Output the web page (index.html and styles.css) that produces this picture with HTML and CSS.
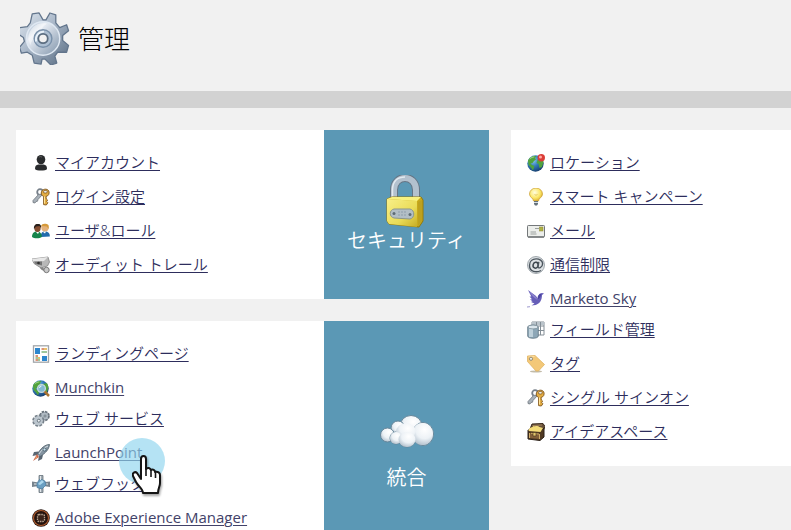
FILE: index.html
```html
<!DOCTYPE html>
<html lang="ja">
<head>
<meta charset="utf-8">
<meta name="viewport" content="width=device-width, initial-scale=1">
<title>管理</title>
<link rel="stylesheet" href="styles.css">
</head>
<body>
<svg class="defs" aria-hidden="true">
  <defs>
    <linearGradient id="steel" x1="0" y1="0" x2="1" y2="1"><stop offset="0" stop-color="#e2eaf2"/><stop offset=".45" stop-color="#a9b7c8"/><stop offset="1" stop-color="#566a80"/></linearGradient>
    <linearGradient id="disc" x1="0" y1="0" x2="1" y2="1"><stop offset="0" stop-color="#91a8c1"/><stop offset=".3" stop-color="#e9eef5"/><stop offset=".65" stop-color="#b3c0cf"/><stop offset="1" stop-color="#8195aa"/></linearGradient>
    <linearGradient id="gold" x1="0" y1="0" x2="1" y2="1"><stop offset="0" stop-color="#f8ef88"/><stop offset=".6" stop-color="#eadc58"/><stop offset="1" stop-color="#c8ad24"/></linearGradient>
    <radialGradient id="sea" cx=".35" cy=".3" r=".75"><stop offset="0" stop-color="#8fd0ee"/><stop offset=".5" stop-color="#3179bb"/><stop offset="1" stop-color="#163c6b"/></radialGradient>
    <radialGradient id="bulb" cx=".4" cy=".35" r=".7"><stop offset="0" stop-color="#fffde0"/><stop offset=".6" stop-color="#fbe768"/><stop offset="1" stop-color="#d9a92c"/></radialGradient>
    <radialGradient id="puff" cx=".6" cy=".3" r=".75"><stop offset="0" stop-color="#ffffff"/><stop offset=".55" stop-color="#edf2f6"/><stop offset="1" stop-color="#aebdca"/></radialGradient>
    <symbol id="keys" viewBox="0 0 18 18">
      <circle cx="8" cy="4" r="2.800" fill="none" stroke="#77808a" stroke-width="1.800"/>
      <path d="M6.500 6.500 1 12.500v2l2 .5 1-1.500 1.500-.3.500-1.700L10 7" fill="#a8b1b9" stroke="#6f767d" stroke-width=".8"/>
      <path d="M9.500 3.500C10.500 1 15 0 16.800 3c1 2.500-.3 5-2.800 5.500l.3 2.500 1.300 1-.9 1.500 1.200 1.300-1.600 2.200-2.700-.4V8.500C9.500 7.500 8.800 5.600 9.500 3.500z" fill="#e3ad43" stroke="#80561d" stroke-width=".9"/>
      <path d="M12.500 8.500v7" stroke="#ffe49a"/><ellipse cx="13.300" cy="3.800" rx="2.100" ry="1.300" fill="#eef3f3" stroke="#80561d" stroke-width=".8"/>
    </symbol>
    <symbol id="globe" viewBox="0 0 18 18">
      <circle cx="8.500" cy="9.500" r="8.200" fill="url(#sea)"/>
      <path d="M1 6.500C2.500 3 6 1.500 9.500 2L8 4 9 5.500 7 7 5.500 9 3.500 9.500 5 11 7.500 12 6 16.500 C4.500 14 3 12 1.500 11zM11 5l4-1 1.500 4-1.500 5-2.500 1-1-4-2-1z" fill="#51a33d"/>
      <path d="M2.800 5c1.300-1.500 3-2 4.500-2" fill="none" stroke="#a6d885"/>
    </symbol>
  </defs>
</svg>

<header class="header">
  <svg class="header-icon" viewBox="0 0 50 54" aria-hidden="true">
    <path d="M12 2l7-1 4 7 3 0 4-7 6 2v8l4 5 7-3 2 6-6 5v5l6 5-2 7-9 0-3 4 2 7-6 2-6-6-3 0-1 5-7-1-2-8-5-3-6 1-2-6 5-6-1-4-6-4 2-6 8-1 3-4z" fill="url(#steel)" stroke="#62758c" stroke-width="1.300" stroke-linejoin="round"/>
    <circle cx="23" cy="27" r="17" fill="url(#disc)" stroke="#dfe8f2" stroke-width="1.500"/>
    <path d="M8 27C9 14 19 10 27 12c-7 4-5 8-10 12-4 3-6 6-7 10z" fill="#fff" opacity=".45"/>
    <circle cx="23" cy="27" r="9" fill="#adbfd2" stroke="#7a91aa" stroke-width="1.500"/>
    <path d="M16 30a8 8 0 0 1 8-10" fill="none" stroke="#e9f2fa" stroke-width="2"/>
    <circle cx="23" cy="27" r="4.800" fill="#f1f1f1" stroke="#5b6d80" stroke-width="1.800"/>
  </svg>
  <h1 class="title">管理</h1>
</header>

<main class="board">
  <div class="column">
    <section class="card split">
      <ul class="links">
        <li class="row"><svg class="icon" viewBox="0 0 18 18"><ellipse cx="9" cy="5.600" rx="4.300" ry="4.700" fill="#292b2d"/><path d="M3 15c0-3 1-4 3.500-4.500h5C14 11 15 12 15 15c-1 2-11 2-12 0z" fill="#292b2d"/><path d="M7 3.200c1-.8 2-.8 3 0" stroke="#666" fill="none"/></svg><a class="link" href="#">マイアカウント</a></li>
        <li class="row"><svg class="icon"><use href="#keys"/></svg><a class="link" href="#">ログイン設定</a></li>
        <li class="row"><svg class="icon" viewBox="0 0 18 18"><path d="M9 15c-.3-4 1-5.500 4-5.500s5 1.500 4.800 5z" fill="#216bac"/><circle cx="13" cy="5.800" r="3.700" fill="#e4b27b"/><path d="M9 5C9 1 14 1 16.500 3l.3 4-2-2.500L10 4z" fill="#d69a3a"/><path d="M11 10l2 1.500 1-2z" fill="#fff"/><path d="M0 15c0-4 2-5.500 5-5.500s5 2 4.800 5.500c-2 1.800-8 1.800-9.800 0z" fill="#16854c"/><ellipse cx="5.500" cy="6" rx="3.200" ry="4" fill="#854e32"/><path d="M2 7C1.500 3 4 1.600 6.500 2c2 .2 3 1.500 2.500 4L7.500 4 4 4.500z" fill="#27201d"/><path d="M4 10l2 2 1-2z" fill="#fff"/></svg><a class="link" href="#">ユーザ&amp;ロール</a></li>
        <li class="row"><svg class="icon" viewBox="0 0 18 18"><path d="M10 8c-2 3-1 5 3 6" stroke="#858585" stroke-width="2.500" fill="none"/><circle cx="14.500" cy="14" r="2.700" fill="#c9c9c9" stroke="#777"/><path d="M0 3l16-2 1.500 5-2 4-6.500 2-7-4.500z" fill="#b8b8b8" stroke="#777" stroke-width=".7"/><path d="M0 3l16-2-4 4-11 .4z" fill="#e7e7e7"/><path d="M2 5.500h8v4L3.500 8z" fill="#747474"/><circle cx="6.500" cy="7" r="1.300" fill="#303030"/></svg><a class="link" href="#">オーディット トレール</a></li>
      </ul>
      <div class="tile">
        <svg class="tile-icon lock" viewBox="0 0 44 54" aria-hidden="true">
          <path d="M9 26V15C9-1 31-1 31 15v11" fill="none" stroke="#657585" stroke-width="8"/>
          <path d="M9 26V15C9-1 31-1 31 15v11" fill="none" stroke="#b3c1ce" stroke-width="6"/>
          <path d="M7.500 25V14C8 5 14 2 20 2" fill="none" stroke="#e3eaf0" stroke-width="1.500"/>
          <path d="M2 24l5-2h29l2 3v21l-4 6-30-3-2-3z" fill="#c9aa1b" stroke="#91780c"/>
          <path d="M2 24l30 2v26L4 49l-2-3z" fill="url(#gold)"/><path d="M2 24l5-2h29l-4 4z" fill="#f8f17f"/>
          <path d="M33 27v24l4-5V25z" fill="#bda11f"/>
          <path d="M9 34h16c5 1 5 9 0 10l-16-1c-5-1-5-8 0-9z" fill="#b2bec6" stroke="#8b968c"/><circle cx="9" cy="38.500" r="1.500" fill="#5d6b73"/><circle cx="25" cy="39.500" r="1.500" fill="#5d6b73"/><path d="M13 37h8M13 40h8" stroke="#9aa9b5" stroke-width="1.500" stroke-dasharray="2 1"/>
        </svg>
        <h2 class="tile-title">セキュリティ</h2>
      </div>
    </section>

    <section class="card split tall">
      <ul class="links">
        <li class="row"><svg class="icon" viewBox="0 0 18 18"><rect x="1.500" y=".8" width="15" height="16.400" fill="#fff" stroke="#a2a6aa" stroke-width="1.300"/><path d="M3 3h5v6H3zM10 11h5v5h-5z" fill="#2d86cd"/><path d="M9.500 4H12M3.500 11H6M3.500 15H6" stroke="#d0704c" stroke-width="1.500"/><path d="M12 4h3M6 13h2" stroke="#e2ac3b" stroke-width="1.500"/><path d="M9.500 7H15M3.500 13H6M6 15h2" stroke="#7db57d" stroke-width="1.500"/></svg><a class="link" href="#">ランディングページ</a></li>
        <li class="row latin"><svg class="icon" viewBox="0 0 18 18"><use href="#globe" width="18" height="18"/><circle cx="9.500" cy="9.500" r="3.900" fill="#83bad2" stroke="#c5d8de" stroke-width="1.300"/><path d="M7.500 9a2 2 0 0 1 2-2" fill="none" stroke="#e9f7fb"/><path d="M12.500 12.500l4.500 4.500" stroke="#aa7434" stroke-width="2.500"/></svg><a class="link" href="#">Munchkin</a></li>
        <li class="row"><svg class="icon" viewBox="0 0 18 18"><circle cx="12.500" cy="6" r="4.200" fill="#98a3ac" stroke="#69737d" stroke-width="2.200" stroke-dasharray="2.400 .9"/><circle cx="12.500" cy="6" r="3.500" fill="#b0bac3"/><circle cx="6.300" cy="10.700" r="5" fill="#c4ccd2" stroke="#76808a" stroke-width="2.200" stroke-dasharray="2.700 1.200"/><circle cx="6.300" cy="10.700" r="4.500" fill="#bcc6ce"/><circle cx="6.800" cy="10.700" r="1.500" fill="#f4f6f8" stroke="#697680"/><circle cx="13" cy="6" r="1" fill="#f4f6f8" stroke="#697680"/></svg><a class="link" href="#">ウェブ サービス</a></li>
        <li class="row latin pointed"><svg class="icon" viewBox="0 0 18 18"><path d="M6.500 7.500L2 8 .5 12l5-1zM11 11l-1 4-4 2 1-5z" fill="#596672"/><path d="M17.500.5C13 .5 9 4 5.500 10L8 12.500C14 9 17 5 17.500.5z" fill="#8494a1" stroke="#4d5d68" stroke-width=".8"/><path d="M16 2C11 4 9 7 7 10" fill="none" stroke="#dce4e9"/><circle cx="12.500" cy="5.500" r="1.500" fill="#c9e2ed" stroke="#374d5b" stroke-width=".7"/><path d="M5 10L1 17l6-4z" fill="#c9664c"/><path d="M5 12l-3 3.500 3-2z" fill="#f2b16c"/></svg><a class="link" href="#">LaunchPoint</a>
          <span class="pointer" aria-hidden="true"><svg class="hand" viewBox="0 0 30 40"><path d="M9 24V4c0-4 5-4 5 0v10c2-2 4-1 5 1 2-1 4 0 4 2 3-1 5 1 5 3v8c0 4-2 5-2 10H11c0-4-5-7-7-11l-3-6c-1-3 2-5 4-3z" fill="#fff" stroke="#151515" stroke-width="2" stroke-linejoin="round"/><path d="M14 12v9M19 15v7M23.500 17v6" stroke="#151515" stroke-width="1.600"/></svg></span></li>
        <li class="row"><svg class="icon" viewBox="0 0 18 18"><path d="M7 .5h4V6H7zM7 12h4v5.500H7z" fill="#a0aab2" stroke="#68737c" stroke-width=".8"/><path d="M0 6.500l5 .8v4L0 12zM13 7l5-.5V12l-5-.8z" fill="#78848e"/><path d="M2 8h14v2H2z" fill="#aeb9c0"/><path d="M5 8l3-4 5 2 1 4-4 4-5-1.500z" fill="#6a9fc2" stroke="#47799b" stroke-width=".7"/><path d="M6 9l4-4 2 2-4 3z" fill="#acd8ee"/><path d="M8.500 1v4M8.500 14v3" stroke="#e1e6e9"/></svg><a class="link" href="#">ウェブフック</a></li>
        <li class="row latin"><svg class="icon" viewBox="0 0 18 18"><circle cx="9" cy="9" r="8.800" fill="#24130e"/><circle cx="9" cy="9" r="7.500" fill="none" stroke="#ad5a2d" stroke-width="1.200"/><rect x="5.500" y="5.500" width="7" height="7" rx="1.500" fill="#3b241b" stroke="#b7a38f" stroke-width="1.300" stroke-dasharray="1.500 .8"/></svg><a class="link" href="#">Adobe Experience Manager</a></li>
      </ul>
      <div class="tile">
        <svg class="tile-icon cloud" viewBox="0 0 54 34" aria-hidden="true"><g fill="url(#puff)" stroke="#66869a" stroke-width="1"><ellipse cx="31" cy="12" rx="11" ry="10.500"/><ellipse cx="18" cy="14" rx="7" ry="7"/><ellipse cx="7.500" cy="21" rx="7" ry="7"/><ellipse cx="43" cy="20" rx="10.500" ry="11.500"/><ellipse cx="16" cy="24" rx="6" ry="6"/><ellipse cx="27" cy="25.500" rx="8.500" ry="7.500"/></g><g fill="url(#puff)"><ellipse cx="42.500" cy="20" rx="10.500" ry="11"/><ellipse cx="26" cy="18" rx="10" ry="9"/><ellipse cx="16" cy="24" rx="6" ry="6"/><ellipse cx="27" cy="25.500" rx="8.500" ry="7.500"/></g></svg>
        <h2 class="tile-title spaced">統合</h2>
      </div>
    </section>
  </div>

  <div class="column">
    <section class="card">
      <ul class="links">
        <li class="row"><svg class="icon" viewBox="0 0 18 18"><use href="#globe" width="18" height="18"/><circle cx="14.300" cy="3.700" r="3.700" fill="#db3d38"/><circle cx="13.500" cy="3" r="1.500" fill="#ffaaa2"/></svg><a class="link" href="#">ロケーション</a></li>
        <li class="row"><svg class="icon" viewBox="0 0 18 18"><path d="M6.500 13C6.500 10 2.500 9.500 2.500 6a6.500 6 0 0 1 13 0c0 3.500-4 4-4 7z" fill="url(#bulb)" stroke="#c99b2c" stroke-width=".7"/><path d="M7 13h4v3l-1 1.500H8L7 16z" fill="#65717b"/><path d="M7 14.500h4" stroke="#d4dde3"/><path d="M7.500 6l1.500 1.500L10.500 6" fill="none" stroke="#d8ac3d" stroke-width=".6"/></svg><a class="link" href="#">スマート キャンペーン</a></li>
        <li class="row"><svg class="icon" viewBox="0 0 18 18"><rect x=".5" y="3.500" width="17" height="11.500" rx=".8" fill="#eceeeb" stroke="#74787a"/><path d="M1 15h16" stroke="#55595b"/><rect x="12.500" y="5" width="3.500" height="4" fill="#aeb346" stroke="#8e852c" stroke-width=".5"/><path d="M8 6.500h4M3.500 10H9M3.500 12h6" stroke="#9ba09e"/></svg><a class="link" href="#">メール</a></li>
        <li class="row"><svg class="icon" viewBox="0 0 18 18"><circle cx="9" cy="9" r="8.500" fill="#dde1e4" stroke="#8b949b" stroke-width=".8"/><ellipse cx="8.600" cy="9.200" rx="2.500" ry="3" fill="none" stroke="#3e474f" stroke-width="1.500" transform="rotate(15 8.600 9.200)"/><path d="M11.800 5.800l-.8 5c0 2.200 4.600 1 4.600-3C15.600 1.500 2.500.5 2.500 9.500c0 6.500 7 7.500 11.500 5" fill="none" stroke="#4b555d" stroke-width="1.400"/></svg><a class="link" href="#">通信制限</a></li>
        <li class="row latin"><svg class="icon" viewBox="0 0 18 18"><path d="M1 0l8 6 2 3c0-3 1-6 4-6l2 .5-2 1.500c0 6-3 9-6.500 10l-4 .5 3-2L4 12l1.500-.7-2.500-1.800 2-.3-2.500-2.700 1.800 0z" fill="#665eb8"/><path d="M2 1l7 6 1.500 3C7 8 4 5 2 1z" fill="#8c83cd"/><path d="M10.500 9c0-3 1-5 4-5-1 3-2 5-4 5z" fill="#4a43a0"/><path d="M0 17l3-.3" stroke="#9e99cf"/></svg><a class="link" href="#">Marketo Sky</a></li>
        <li class="row"><svg class="icon" viewBox="0 0 18 18"><path d="M5 1h12v13H5z" fill="#fff" stroke="#848e96"/><path d="M5 1h12v3H5z" fill="#bac4cb"/><path d="M5 5h12M5 9.500h12M9.500 1v13M13.500 1v13" stroke="#848e96"/><path d="M.7 6c0-2.500 10.600-2.500 10.600 0v9c0 3-10.600 3-10.600 0z" fill="#8ea7b7" stroke="#5e7481" stroke-width=".8"/><path d="M3 7v9M5 7v9" stroke="#d9e6ed" stroke-width="1.300"/><ellipse cx="6" cy="6" rx="5" ry="1.900" fill="#dce6ec" stroke="#718590" stroke-width=".7"/></svg><a class="link" href="#">フィールド管理</a></li>
        <li class="row"><svg class="icon" viewBox="0 0 18 18"><ellipse cx="9" cy="16.500" rx="6" ry="1" fill="#c2bba9"/><path d="M.5 1L8 .5l9.500 9-6 6.500H9L.5 6.500z" fill="#f3c878" stroke="#dfb463" stroke-width=".8"/><path d="M1.500 2L7.500 1.500" stroke="#ffe0a3"/><circle cx="4" cy="3.800" r="1.600" fill="#e8ecea" stroke="#9b8e70"/></svg><a class="link" href="#">タグ</a></li>
        <li class="row"><svg class="icon"><use href="#keys"/></svg><a class="link" href="#">シングル サインオン</a></li>
        <li class="row"><svg class="icon" viewBox="0 0 18 18"><path d="M3 6L5 1l11-.5 2 3-2 4.500z" fill="#675039" stroke="#38291d"/><path d="M5.500 2.500L15 2" stroke="#a1835d"/><path d="M1 7l12 1 4-3v9l-4 3.500L1 16z" fill="#503922" stroke="#2b2019"/><path d="M1.500 8c1-5 4-3 5-5 2 1 4-1 6 1l3.500 1-2.500 4z" fill="#f4dc78"/><path d="M2 10l11 1v5L2 15z" fill="#826039"/><path d="M2.500 10v5M12.500 11v5M4 10.300l8 .7" stroke="#d0ad68"/><path d="M6 9.500h3V13H6z" fill="#e1c66c" stroke="#45311c" stroke-width=".6"/></svg><a class="link" href="#">アイデアスペース</a></li>
      </ul>
    </section>
  </div>
</main>
</body>
</html>
```
FILE: styles.css
```css
* {
  box-sizing: border-box;
}

body {
  height: 100vh;
  margin: 0;
  overflow: hidden;
  background: #f1f1f1;
  color: #2d2d5c;
  font-family: "Open Sans", "Noto Sans CJK JP", sans-serif;
  font-size: 15px;
  font-weight: 350;
}

.defs {
  position: absolute;
  width: 0;
  height: 0;
}

.header {
  display: flex;
  align-items: center;
  gap: 8px;
  padding: 12px 20px 26px;
  border-bottom: 17px solid #d2d2d2;
}

.header-icon {
  width: 50px;
  height: 53px;
}

.title {
  margin: 0;
  color: #000;
  font-size: 26px;
  font-weight: 300;
  line-height: 36px;
}

.board {
  display: grid;
  grid-template-columns: 473px minmax(280px, 1fr);
  align-items: start;
  gap: 22px;
  padding: 22px 0 22px 16px;
}

.column {
  display: grid;
  gap: 22px;
}

.card {
  background: #fff;
}

.split {
  display: grid;
  grid-template-columns: 1fr 165px;
}

.tall {
  min-height: 264px;
}

.links {
  margin: 0;
  padding: 15px 16px 18px;
  list-style: none;
}

.row {
  display: flex;
  align-items: center;
  gap: 5px;
  padding: 5px 0;
}

.row.latin {
  padding-bottom: 2px;
}

.icon {
  flex: none;
  width: 18px;
  height: 18px;
  margin-top: 2px;
}

.link {
  color: inherit;
  line-height: 24px;
  text-decoration: underline;
  text-decoration-thickness: 1px;
  text-underline-offset: 2px;
  white-space: nowrap;
}

.latin .link {
  color: #424269;
  font-weight: 400;
}

.tile {
  display: flex;
  flex-direction: column;
  align-items: center;
  justify-content: center;
  padding-bottom: 2px;
  background: #5b98b5;
  color: #fff;
}

.lock {
  width: 44px;
  height: 54px;
}

.cloud {
  width: 54px;
  height: 34px;
}

.tile-title {
  margin: 0;
  font-size: 20px;
  font-weight: 350;
  line-height: 24px;
}

.spaced {
  margin-top: 18px;
}

.pointed {
  position: relative;
}

.pointer {
  position: absolute;
  top: 3px;
  left: 87px;
  z-index: 1;
  width: 46px;
  height: 46px;
  border-radius: 50%;
  background: rgb(142 212 238 / 65%);
}

.hand {
  position: absolute;
  top: 17px;
  left: 13px;
  width: 30px;
  height: 40px;
  filter: drop-shadow(1px 2px 1px rgb(0 0 0 / 35%));
}
```
